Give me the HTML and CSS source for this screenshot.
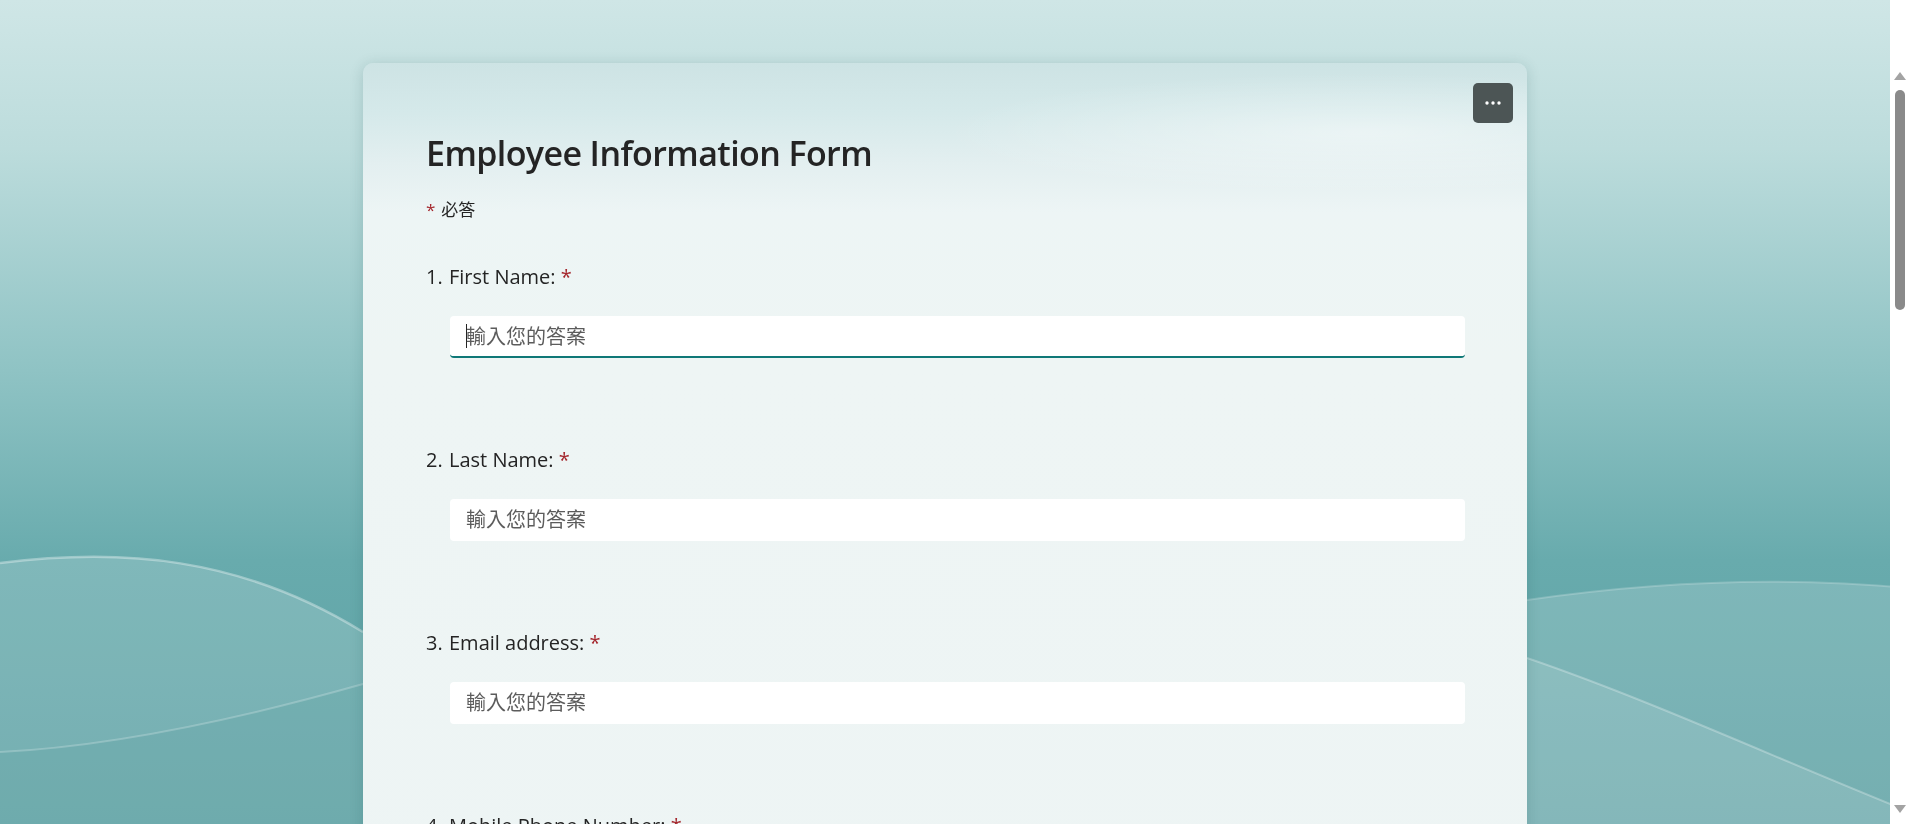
FILE: index.html
```html
<!DOCTYPE html>
<html lang="zh-Hant">
<head>
<meta charset="utf-8">
<title>Employee Information Form</title>
<link rel="stylesheet" href="styles.css">
</head>
<body>
<div class="backdrop">
  <svg class="backdrop-art" viewBox="0 0 1910 824" preserveAspectRatio="none" xmlns="http://www.w3.org/2000/svg">
    <defs>
      <linearGradient id="sky" x1="0" y1="0" x2="0" y2="1">
        <stop offset="0" stop-color="#cfe6e6"/>
        <stop offset="0.18" stop-color="#bcdcdc"/>
        <stop offset="0.45" stop-color="#8fc3c4"/>
        <stop offset="0.68" stop-color="#68abad"/>
        <stop offset="1" stop-color="#5a9fa2"/>
      </linearGradient>
    </defs>
    <rect x="0" y="0" width="1910" height="824" fill="url(#sky)"/>
    <path d="M0,563 C120,548 240,556 363,632 L1527,600 C1650,582 1780,576 1910,588 L1910,824 L0,824 Z" fill="#ffffff" fill-opacity="0.16"/>
    <path d="M0,752 C120,746 250,716 363,684 L363,824 L0,824 Z" fill="#5a9ea1" fill-opacity="0.2"/>
    <path d="M1527,658 C1650,700 1780,760 1910,812 L1910,824 L1527,824 Z" fill="#ffffff" fill-opacity="0.12"/>
    <path d="M0,563 C120,548 240,556 363,632" fill="none" stroke="#ffffff" stroke-opacity="0.35" stroke-width="2.5"/>
    <path d="M0,752 C120,746 250,716 363,684" fill="none" stroke="#ffffff" stroke-opacity="0.22" stroke-width="2"/>
    <path d="M1527,600 C1650,582 1780,576 1910,588" fill="none" stroke="#ffffff" stroke-opacity="0.2" stroke-width="2"/>
    <path d="M1527,658 C1650,700 1780,760 1910,812" fill="none" stroke="#ffffff" stroke-opacity="0.28" stroke-width="2"/>
  </svg>
</div>
<div class="page">
  <main class="viewport">
    <section class="card">
      <button class="more-btn" aria-label="更多選項">
        <svg width="16" height="4" viewBox="0 0 16 4" xmlns="http://www.w3.org/2000/svg">
          <circle cx="2" cy="2" r="1.7" fill="#ffffff"/>
          <circle cx="8" cy="2" r="1.7" fill="#ffffff"/>
          <circle cx="14" cy="2" r="1.7" fill="#ffffff"/>
        </svg>
      </button>
      <h1 class="form-title">Employee Information Form</h1>
      <div class="required-note"><span class="star">*</span> 必答</div>

      <div class="question">
        <div class="q-label"><span class="q-num">1.</span><span class="q-text">First Name: <span class="star">*</span></span></div>
        <div class="answer answer-focus"><span class="caret"></span><span class="placeholder">輸入您的答案</span></div>
      </div>

      <div class="question">
        <div class="q-label"><span class="q-num">2.</span><span class="q-text">Last Name: <span class="star">*</span></span></div>
        <div class="answer"><span class="placeholder">輸入您的答案</span></div>
      </div>

      <div class="question">
        <div class="q-label"><span class="q-num">3.</span><span class="q-text">Email address: <span class="star">*</span></span></div>
        <div class="answer"><span class="placeholder">輸入您的答案</span></div>
      </div>

      <div class="question">
        <div class="q-label"><span class="q-num">4.</span><span class="q-text">Mobile Phone Number: <span class="star">*</span></span></div>
        <div class="answer"><span class="placeholder">輸入您的答案</span></div>
      </div>
    </section>
  </main>
  <div class="scrollbar">
    <div class="sb-arrow sb-up"></div>
    <div class="sb-track"><div class="sb-thumb"></div></div>
    <div class="sb-arrow sb-down"></div>
  </div>
</div>
</body>
</html>
```

FILE: styles.css
```css
html, body {
  margin: 0;
  padding: 0;
  width: 1910px;
  height: 824px;
  overflow: hidden;
}

body {
  font-family: "Open Sans", "Noto Sans", "Noto Sans CJK TC", sans-serif;
  color: #242424;
  position: relative;
}

.backdrop {
  position: fixed;
  inset: 0;
  z-index: 0;
}

.backdrop-art {
  display: block;
  width: 100%;
  height: 100%;
}

.page {
  position: relative;
  z-index: 1;
  display: flex;
  height: 824px;
}

.viewport {
  flex: 1;
  display: flex;
  justify-content: center;
  padding-top: 63px;
  overflow: hidden;
}

.card {
  position: relative;
  width: 1164px;
  box-sizing: border-box;
  padding: 66px 62px 200px 63px;
  border-radius: 10px;
  background:
    radial-gradient(ellipse 420px 60px at 1000px 70px, rgba(255,255,255,0.45), rgba(255,255,255,0) 100%),
    linear-gradient(180deg, #cde3e4 0px, #d5e9ea 50px, #e3eff0 100px, #edf5f5 150px, #eef5f4 300px, #edf4f4 100%);
  box-shadow: 0 2px 14px rgba(20, 70, 72, 0.18);
  height: 1100px;
}

.more-btn {
  position: absolute;
  top: 20px;
  right: 14px;
  width: 40px;
  height: 40px;
  border: none;
  border-radius: 5px;
  background: #4c5555;
  display: flex;
  align-items: center;
  justify-content: center;
  padding: 0;
}

.form-title {
  margin: 0;
  font-family: "Open Sans", sans-serif;
  font-weight: 600;
  font-size: 34px;
  line-height: 48px;
  letter-spacing: -0.6px;
  color: #242424;
}

.required-note {
  margin-top: 20px;
  font-family: "Noto Sans CJK TC", sans-serif;
  font-size: 17px;
  line-height: 24px;
  color: #242424;
}

.required-note .star {
  margin-right: 2px;
}

.star {
  color: #a4262c;
  font-family: "Open Sans", sans-serif;
}

.question {
  margin-top: 41px;
}

.question + .question {
  margin-top: 88px;
}

.q-label {
  display: flex;
  gap: 5px;
  font-size: 20px;
  line-height: 28px;
  color: #242424;
}

.q-num {
  width: 18px;
}

.answer {
  margin-top: 25px;
  margin-left: 24px;
  height: 42px;
  box-sizing: border-box;
  background: #ffffff;
  border-radius: 4px;
  border-bottom: 2px solid transparent;
  display: flex;
  align-items: center;
  padding: 0 16px;
}

.answer-focus {
  border-bottom-color: #0f7877;
}

.placeholder {
  font-family: "Noto Sans CJK TC", sans-serif;
  font-size: 20px;
  color: #5c5c5c;
  line-height: 26px;
}

.caret {
  display: inline-block;
  width: 1px;
  height: 24px;
  background: #242424;
  margin-right: -1px;
}

.scrollbar {
  width: 20px;
  flex: none;
  background: #ffffff;
  display: flex;
  flex-direction: column;
  align-items: center;
}

.sb-arrow {
  width: 0;
  height: 0;
  border-left: 6px solid transparent;
  border-right: 6px solid transparent;
}

.sb-up {
  margin-top: 72px;
  border-bottom: 8px solid #a3a3a3;
}

.sb-down {
  margin-bottom: 11px;
  border-top: 8px solid #a3a3a3;
}

.sb-track {
  flex: 1;
  width: 100%;
  display: flex;
  justify-content: center;
}

.sb-thumb {
  margin-top: 10px;
  width: 10px;
  height: 220px;
  border-radius: 5px;
  background: #8a8a8a;
}
```
